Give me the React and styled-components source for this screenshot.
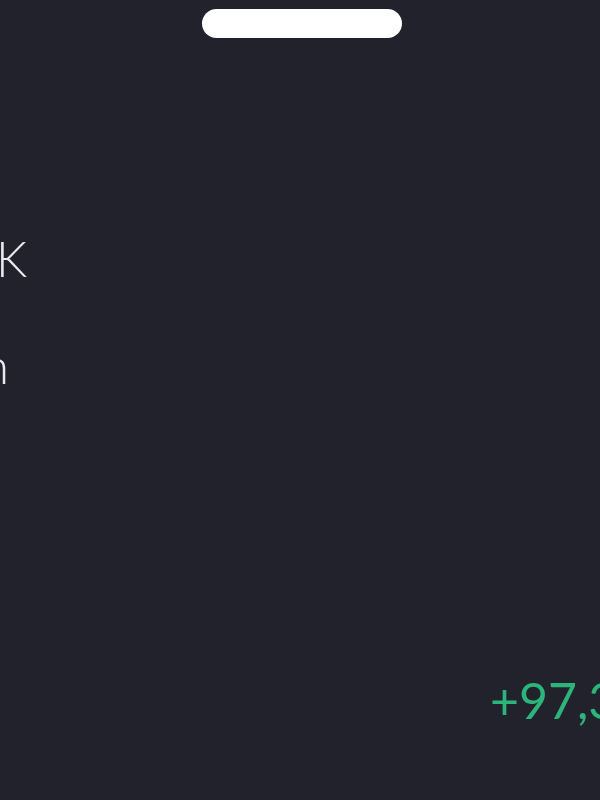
import React from "react";
import styled, { createGlobalStyle } from "styled-components";

const Global = createGlobalStyle`
  html, body { margin: 0; padding: 0; background: #22222c; }
  body { font-family: Lato, "Noto Sans", sans-serif; }
`;

const Screen = styled.div`
  width: 600px;
  height: 800px;
  overflow: hidden;
  background: #22222c;
  display: flex;
  flex-direction: column;
`;

const Notch = styled.div`
  align-self: center;
  width: 200px;
  height: 29px;
  margin-top: 9px;
  margin-left: 4px;
  border-radius: 15px;
  background: #ffffff;
`;

const Stats = styled.div`
  display: flex;
  flex-direction: column;
  margin-top: 196px;
  gap: 58px;
`;

const Value = styled.div`
  display: flex;
  justify-content: flex-end;
  width: ${(p) => p.end}px;
  white-space: nowrap;
  color: #e9e9ee;
  font-weight: 300;
  font-size: 49px;
  line-height: 1;
`;

const Change = styled.div`
  margin-top: auto;
  margin-bottom: 75px;
  padding-left: 490px;
  white-space: nowrap;
  color: #2db47a;
  font-size: 50px;
  line-height: 1;
`;

export default function App() {
  return (
    <Screen>
      <Global />
      <Notch />
      <Stats>
        <Value end={27}>$120,5K</Value>
        <Value end={9}>Bitcoin</Value>
      </Stats>
      <Change>+97,32%</Change>
    </Screen>
  );
}
